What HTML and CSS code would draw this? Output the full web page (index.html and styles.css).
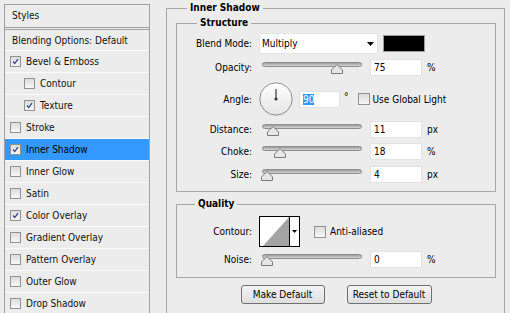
FILE: index.html
```html
<!DOCTYPE html>
<html lang="en">
<head>
    <meta charset="UTF-8">
    <meta name="viewport" content="width=device-width, initial-scale=1.0">
    <title>Layer Style - Inner Shadow</title>
    <link rel="stylesheet" href="styles.css">
</head>
<body>
    <div class="dialog">
        <!-- Left list of layer styles -->
        <div class="style-list">
            <div class="list-head">Styles</div>
            <div class="list-item blending">Blending Options: Default</div>
            <div class="list-item"><span class="check on"><svg viewBox="0 0 11 11"><polyline points="2.5,5.5 4.5,8 8.5,2.5"/></svg></span>Bevel &amp; Emboss</div>
            <div class="list-item sub"><span class="check"></span>Contour</div>
            <div class="list-item sub"><span class="check on"><svg viewBox="0 0 11 11"><polyline points="2.5,5.5 4.5,8 8.5,2.5"/></svg></span>Texture</div>
            <div class="list-item"><span class="check"></span>Stroke</div>
            <div class="list-item selected"><span class="check on"><svg viewBox="0 0 11 11"><polyline points="2.5,5.5 4.5,8 8.5,2.5"/></svg></span>Inner Shadow</div>
            <div class="list-item"><span class="check"></span>Inner Glow</div>
            <div class="list-item"><span class="check"></span>Satin</div>
            <div class="list-item"><span class="check on"><svg viewBox="0 0 11 11"><polyline points="2.5,5.5 4.5,8 8.5,2.5"/></svg></span>Color Overlay</div>
            <div class="list-item"><span class="check"></span>Gradient Overlay</div>
            <div class="list-item"><span class="check"></span>Pattern Overlay</div>
            <div class="list-item"><span class="check"></span>Outer Glow</div>
            <div class="list-item"><span class="check"></span>Drop Shadow</div>
        </div>

        <!-- Inner Shadow settings -->
        <div class="group outer">
            <div class="group-title outer-title">Inner Shadow</div>

            <div class="group structure">
                <div class="group-title structure-title">Structure</div>

                <div class="row blend-row">
                    <span class="label">Blend Mode:</span>
                    <div class="select">
                        <span>Multiply</span>
                        <svg class="arrow" viewBox="0 0 7 4"><polygon points="0,0 7,0 3.5,4"/></svg>
                    </div>
                    <div class="swatch"></div>
                </div>

                <div class="row">
                    <span class="label">Opacity:</span>
                    <div class="slider">
                        <div class="track"></div>
                        <svg class="knob" style="left: 69px" viewBox="0 0 12 10"><polygon points="6,0.5 11.5,6 11.5,9.5 0.5,9.5 0.5,6"/></svg>
                    </div>
                    <div class="field">75</div>
                    <span class="unit">%</span>
                </div>

                <div class="row angle-row">
                    <span class="label">Angle:</span>
                    <svg class="dial" viewBox="0 0 34 34">
                        <defs>
                            <linearGradient id="dialFill" x1="0" y1="0" x2="0" y2="1">
                                <stop offset="0" stop-color="#ffffff"/>
                                <stop offset="1" stop-color="#e4e4e4"/>
                            </linearGradient>
                        </defs>
                        <circle cx="17" cy="17" r="16.2" fill="url(#dialFill)" stroke="#8e8e8e"/>
                        <line x1="17" y1="17" x2="17" y2="7" stroke="#3a3a3a" stroke-width="1.2"/>
                        <circle cx="17" cy="17" r="1.6" fill="#3a3a3a"/>
                    </svg>
                    <div class="field angle-field"><span class="highlight">90</span></div>
                    <span class="degree">°</span>
                    <span class="check box13 global-check"></span>
                    <span class="check-label">Use Global Light</span>
                </div>

                <div class="row">
                    <span class="label">Distance:</span>
                    <div class="slider">
                        <div class="track"></div>
                        <svg class="knob" style="left: 5px" viewBox="0 0 12 10"><polygon points="6,0.5 11.5,6 11.5,9.5 0.5,9.5 0.5,6"/></svg>
                    </div>
                    <div class="field">11</div>
                    <span class="unit">px</span>
                </div>

                <div class="row">
                    <span class="label">Choke:</span>
                    <div class="slider">
                        <div class="track"></div>
                        <svg class="knob" style="left: 12px" viewBox="0 0 12 10"><polygon points="6,0.5 11.5,6 11.5,9.5 0.5,9.5 0.5,6"/></svg>
                    </div>
                    <div class="field">18</div>
                    <span class="unit">%</span>
                </div>

                <div class="row size-row">
                    <span class="label">Size:</span>
                    <div class="slider">
                        <div class="track"></div>
                        <svg class="knob" style="left: -1px" viewBox="0 0 12 10"><polygon points="6,0.5 11.5,6 11.5,9.5 0.5,9.5 0.5,6"/></svg>
                    </div>
                    <div class="field">4</div>
                    <span class="unit">px</span>
                </div>
            </div>

            <div class="group quality">
                <div class="group-title quality-title">Quality</div>

                <div class="row contour-row">
                    <span class="label">Contour:</span>
                    <svg class="contour" viewBox="0 0 41 31">
                        <rect x="0.5" y="0.5" width="40" height="30" fill="#ffffff" stroke="#000000"/>
                        <polygon points="4,30 30,1 30,30" fill="#a3a3a3"/>
                        <line x1="30.5" y1="0" x2="30.5" y2="31" stroke="#000000"/>
                        <polygon points="33,14 38,14 35.5,17" fill="#000000"/>
                    </svg>
                    <span class="check box13 anti-check"></span>
                    <span class="check-label">Anti-aliased</span>
                </div>

                <div class="row noise-row">
                    <span class="label">Noise:</span>
                    <div class="slider">
                        <div class="track"></div>
                        <svg class="knob" style="left: -1px" viewBox="0 0 12 10"><polygon points="6,0.5 11.5,6 11.5,9.5 0.5,9.5 0.5,6"/></svg>
                    </div>
                    <div class="field">0</div>
                    <span class="unit">%</span>
                </div>
            </div>

            <div class="buttons">
                <button class="btn make">Make Default</button>
                <button class="btn reset">Reset to Default</button>
            </div>
        </div>
    </div>
</body>
</html>
```

FILE: styles.css
```css
body {
    margin: 0;
    background-color: #ececec;
    font-family: "DejaVu Sans Condensed", "DejaVu Sans", sans-serif;
    font-stretch: condensed;
    font-size: 10px;
    color: #111;
    overflow: hidden;
}

.dialog {
    display: flex;
    align-items: flex-start;
    padding: 4px 0 0 4px;
    height: 309px;
}

/* Left style list */
.style-list {
    width: 146px;
    box-sizing: border-box;
    border: 1px solid #a0a0a0;
    flex: none;
}

.list-head {
    height: 22px;
    line-height: 22px;
    padding-left: 7px;
    border-bottom: 3px double #a0a0a0;
}

.list-item {
    height: 21px;
    display: flex;
    align-items: center;
    padding-left: 5px;
    border-bottom: 1px solid #fafafa;
}

.list-item.blending {
    height: 20px;
    padding-left: 7px;
}

.list-item.sub {
    padding-left: 19px;
}

.list-item.selected {
    background-color: #3399ff;
    color: #000;
}

.check {
    display: inline-block;
    width: 11px;
    height: 11px;
    box-sizing: border-box;
    border: 1px solid #929292;
    background: linear-gradient(#dcdcdc, #f7f7f7);
    margin-right: 5px;
    flex: none;
}

.check svg {
    display: block;
    width: 9px;
    height: 9px;
    fill: none;
    stroke: #33468a;
    stroke-width: 1.6;
}

.check.box13 {
    width: 12px;
    height: 12px;
}

/* Groups */
.group {
    border: 1px solid #a6a6a6;
    display: flex;
    flex-direction: column;
}

.group.outer {
    margin: 4px 0 0 16px;
    width: 339px;
    height: 330px;
    box-sizing: border-box;
    padding: 0 8px 0 9px;
}

.group-title {
    align-self: flex-start;
    height: 14px;
    line-height: 14px;
    margin-top: -8px;
    padding: 0 3px;
    background-color: #ececec;
    font-weight: bold;
    color: #000;
}

.outer-title {
    margin-left: 11px;
}

.structure-title {
    margin-left: 20px;
}

.quality-title {
    margin-left: 18px;
}

.group.structure {
    margin-top: 8px;
    padding-bottom: 8px;
}

.group.quality {
    margin-top: 12px;
    padding-bottom: 9px;
}

/* Rows */
.row {
    display: flex;
    align-items: center;
    height: 17px;
    margin-top: 5px;
    color: #000;
}

.label {
    width: 75px;
    text-align: right;
    flex: none;
}

.blend-row {
    height: 21px;
    margin-top: 3px;
}

.angle-row {
    height: 34px;
    margin-top: 6px;
}

.size-row {
    margin-top: 6px;
}

.contour-row {
    height: 31px;
    margin-top: 5px;
}

.noise-row {
    margin-top: 4px;
}

.select {
    margin-left: 7px;
    width: 119px;
    height: 21px;
    box-sizing: border-box;
    background-color: #fff;
    border: 1px solid #e4e4e4;
    display: flex;
    align-items: center;
    justify-content: space-between;
    padding: 0 3px 0 2px;
}

.select .arrow {
    width: 7px;
    height: 4px;
}

.swatch {
    margin-left: 5px;
    width: 42px;
    height: 17px;
    box-sizing: border-box;
    border: 1px solid #9c9c9c;
    background-color: #000;
}

.slider {
    margin-left: 10px;
    width: 100px;
    height: 12px;
    position: relative;
    flex: none;
}

.track {
    height: 5px;
    box-sizing: border-box;
    border: 1px solid #8e8e8e;
    border-radius: 3px;
    background: linear-gradient(#9a9a9a, #d6d6d6);
}

.knob {
    position: absolute;
    top: 2px;
    width: 12px;
    height: 10px;
    fill: #e6e6e6;
    stroke: #7a7a7a;
    stroke-width: 1;
}

.field {
    margin-left: 8px;
    width: 52px;
    height: 17px;
    box-sizing: border-box;
    background-color: #fff;
    border: 1px solid #e2e2e2;
    padding-left: 3px;
    line-height: 15px;
    flex: none;
}

.unit {
    margin-left: 5px;
}

.dial {
    margin-left: 7px;
    width: 34px;
    height: 34px;
    flex: none;
}

.angle-field {
    margin-left: 6px;
    width: 41px;
}

.highlight {
    background-color: #3399ff;
    color: #fff;
}

.degree {
    margin-left: 4px;
    margin-top: -5px;
}

.global-check {
    margin-left: 9px;
    margin-right: 3px;
}

.contour {
    margin-left: 7px;
    width: 41px;
    height: 31px;
    flex: none;
}

.anti-check {
    margin-left: 14px;
    margin-right: 4px;
}

/* Buttons */
.buttons {
    display: flex;
    justify-content: center;
    gap: 22px;
    margin-top: 7px;
}

.btn {
    height: 19px;
    padding: 0;
    font-family: "DejaVu Sans Condensed", "DejaVu Sans", sans-serif;
    font-stretch: condensed;
    font-size: 10px;
    color: #000;
    border: 1px solid #707070;
    border-radius: 3px;
    background: linear-gradient(#f4f4f4, #dedede);
}

.btn.make {
    width: 84px;
}

.btn.reset {
    width: 85px;
}
```
